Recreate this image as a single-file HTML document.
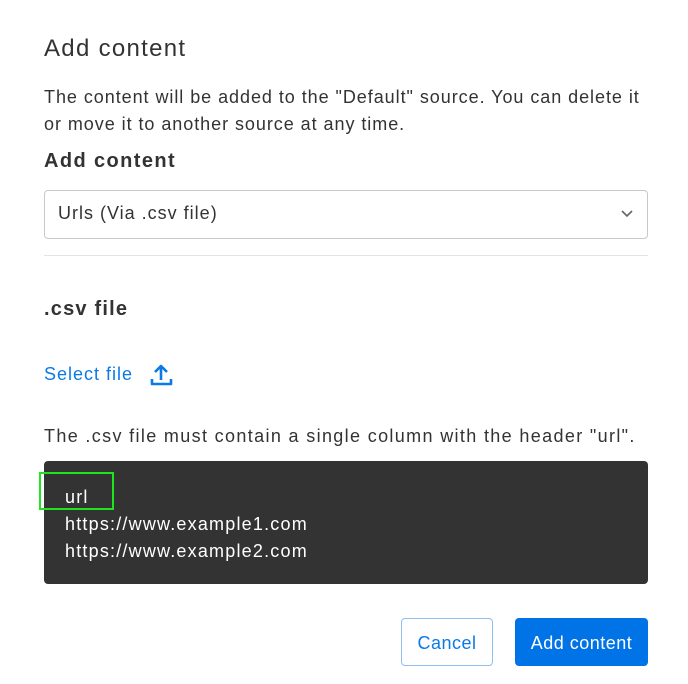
<!DOCTYPE html>
<html><head><style>
body{margin:0;width:688px;height:684px;background:#fff;font-family:"Liberation Sans",sans-serif;color:#333;position:relative;overflow:hidden}
.a{position:absolute;white-space:nowrap}
</style></head><body>
<div class="a" style="left:44px;top:35px;font-size:24px;letter-spacing:1.3px;">Add content</div>
<div class="a" style="left:44px;top:84px;font-size:18px;letter-spacing:0.95px;line-height:27px;">The content will be added to the "Default" source. You can delete it<br>or move it to another source at any time.</div>
<div class="a" style="left:44px;top:150px;font-size:20px;font-weight:bold;letter-spacing:1.4px;">Add content</div>
<div class="a" style="left:44px;top:190px;width:602px;height:47px;border:1px solid #c8c8c8;border-radius:4px;"></div>
<div class="a" style="left:58px;top:203px;font-size:18px;letter-spacing:1px;">Urls (Via .csv file)</div>
<svg class="a" style="left:620px;top:209px" width="14" height="10"><path d="M2 2 L7 7 L12 2" fill="none" stroke="#666" stroke-width="1.6"/></svg>
<div class="a" style="left:44px;top:255px;width:604px;height:1px;background:#e3e3e3;"></div>
<div class="a" style="left:44px;top:298px;font-size:20px;font-weight:bold;letter-spacing:1.2px;">.csv file</div>
<div class="a" style="left:44px;top:364px;font-size:18px;letter-spacing:1px;color:#0a7ae6;">Select file</div>
<svg class="a" style="left:150px;top:362px" width="24" height="24"><path d="M11 18V4M5 10L11 4L17 10M2 17V22H21V17" fill="none" stroke="#0a7ae6" stroke-width="2.6" stroke-linejoin="round"/></svg>
<div class="a" style="left:44px;top:426px;font-size:18px;letter-spacing:1.35px;">The .csv file must contain a single column with the header "url".</div>
<div class="a" style="left:44px;top:461px;width:604px;height:123px;background:#333;border-radius:4px;"></div>
<div class="a" style="left:65px;top:484px;font-size:18px;letter-spacing:1.2px;line-height:27px;color:#fff;">url<br>https://www.example1.com<br>https://www.example2.com</div>
<div class="a" style="left:39px;top:472px;width:71px;height:34px;border:2px solid #1ee61e;"></div>
<div class="a" style="left:401px;top:618px;width:90px;height:46px;border:1px solid #8ebff0;border-radius:4px;color:#0a7ae6;font-size:18px;letter-spacing:0.5px;text-align:center;line-height:48px;">Cancel</div>
<div class="a" style="left:515px;top:618px;width:133px;height:48px;background:#0073e6;border-radius:4px;color:#fff;font-size:18px;letter-spacing:0.5px;text-align:center;line-height:50px;">Add content</div>
</body></html>
